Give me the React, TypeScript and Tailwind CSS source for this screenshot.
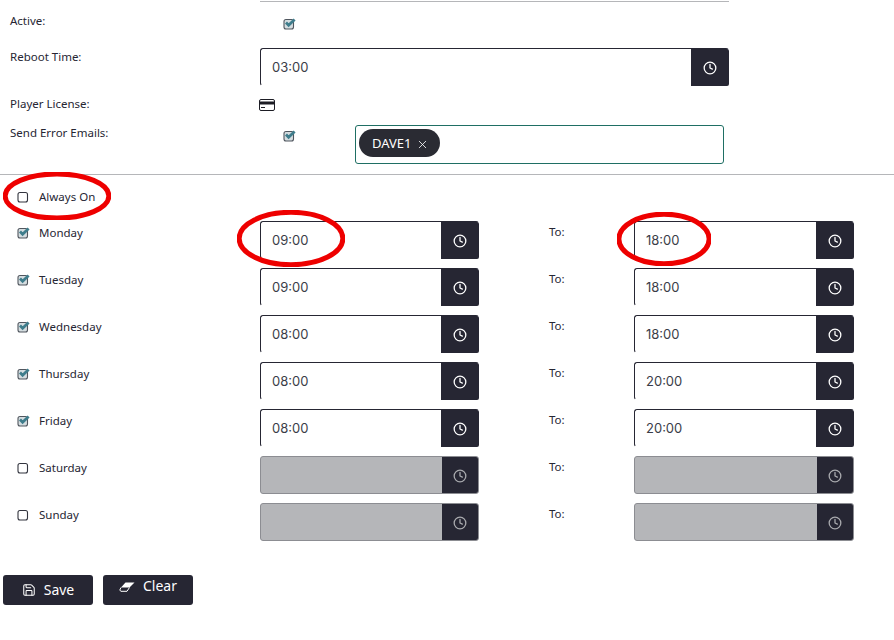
import { Clock, Save, X } from "lucide-react";

const LABEL_FONT = "font-['Noto_Sans',sans-serif]";

const days = [
  { name: "Monday", on: true, from: "09:00", to: "18:00" },
  { name: "Tuesday", on: true, from: "09:00", to: "18:00" },
  { name: "Wednesday", on: true, from: "08:00", to: "18:00" },
  { name: "Thursday", on: true, from: "08:00", to: "20:00" },
  { name: "Friday", on: true, from: "08:00", to: "20:00" },
  { name: "Saturday", on: false, from: "", to: "" },
  { name: "Sunday", on: false, from: "", to: "" },
];

function Check({ on }: { on: boolean }) {
  return (
    <svg width="13" height="12" viewBox="0 0 13 12" className="shrink-0">
      <rect x="1" y="1.5" width="9.5" height="9.5" rx="2" fill={on ? "#d5dde0" : "#fff"} stroke={on ? "#50565e" : "#33353f"} strokeWidth="1.1" />
      {on && <path d="M3 4.6 L5.6 7.2 L11.6 1.4" fill="none" stroke="#3f7d8c" strokeWidth="2.8" />}
    </svg>
  );
}

function TimeInput({ value, disabled, width }: { value: string; disabled: boolean; width: string }) {
  return (
    <div className={`flex h-[38px] ${width} rounded-[3px] border ${disabled ? "border-[#8c8d92] bg-[#b5b6b9]" : "border-[#262633] border-r-transparent border-b-transparent bg-white"}`}>
      <div className="flex-1 pl-[11px] font-['Inter',sans-serif] text-[13px] leading-[37px] text-[#3a3d48]">{value}</div>
      <div className={`flex items-center justify-center rounded-r-[2px] bg-[#262633] ${disabled ? "w-[36px]" : "-mr-[1px] -mb-[1px] w-[38px]"}`}>
        <Clock size={14} strokeWidth={2.2} className={`mt-[1px] ${disabled ? "text-[#a9aaae]" : "text-white"}`} />
      </div>
    </div>
  );
}

function Ring({ className }: { className: string }) {
  return (
    <svg className={`pointer-events-none absolute ${className}`} viewBox="0 0 100 100" preserveAspectRatio="none">
      <ellipse cx="50" cy="50" rx="48" ry="46" fill="none" stroke="#ee0000" strokeWidth="5" vectorEffect="non-scaling-stroke" />
    </svg>
  );
}

export default function App() {
  return (
    <main className={`relative h-[640px] w-[894px] overflow-hidden bg-white text-[11.5px] leading-4 text-[#262633] ${LABEL_FONT}`}>
      <div className="ml-[260px] h-[2px] w-[469px] border-b border-[#b5b6b9]" />

      {/* Device settings */}
      <div className="flex h-[46px] pl-[10px] pt-[11px]">
        <span className="w-[250px]">Active:</span>
        <span className="ml-[23px] mt-[5px]"><Check on /></span>
      </div>
      <div className="flex h-[48px] pl-[10px]">
        <span className="mt-[1px] w-[250px]">Reboot Time:</span>
        <TimeInput value="03:00" disabled={false} width="w-[469px]" />
      </div>
      <div className="flex h-[29px] pl-[10px]">
        <span className="w-[249px]">Player License:</span>
        <svg width="16" height="12" viewBox="0 0 16 12" className="mt-[3px]">
          <rect x="0.5" y="0.5" width="15" height="11" rx="1.5" fill="#fff" stroke="#1c1c24" />
          <rect x="0.5" y="2.5" width="15" height="3" fill="#1c1c24" />
          <rect x="2" y="8" width="4" height="1" fill="#1c1c24" />
        </svg>
      </div>
      <div className="flex h-[49px] pl-[10px]">
        <span className="w-[273px]">Send Error Emails:</span>
        <span className="mt-[5px]"><Check on /></span>
        <div className="ml-[59px] h-[39px] w-[369px] rounded-[3px] border border-[#1f6f64] bg-white p-[3px]">
          <span className="inline-flex h-[28px] items-center gap-[5px] rounded-full bg-[#2a2b33] pl-[13px] pr-[11px] text-[13px] text-white">
            DAVE1
            <X size={13} strokeWidth={1.5} className="mt-[2px]" />
          </span>
        </div>
      </div>

      <hr className="border-[#b5b6b9]" />

      <div className="flex h-[46px] items-center gap-[9px] pb-[2px] pl-[17px]">
        <Check on={false} />
        <span>Always On</span>
      </div>

      {/* Opening hours */}
      <div className="flex flex-col gap-[9px]">
        {days.map((day) => (
          <div key={day.name} className="flex">
            <div className="flex w-[260px] items-start gap-[9px] pl-[17px] pt-[4px]">
              <span className="mt-[2px]"><Check on={day.on} /></span>
              <span>{day.name}</span>
            </div>
            <TimeInput value={day.from} disabled={!day.on} width="w-[219px]" />
            <span className="ml-[70px] w-[85px] pt-[3px]">To:</span>
            <TimeInput value={day.to} disabled={!day.on} width="w-[220px]" />
          </div>
        ))}
      </div>

      <div className="mt-[34px] flex gap-[10px] pl-[3px]">
        <button className="flex h-[30px] w-[90px] items-center justify-center gap-[8px] rounded-[3px] bg-[#262633] text-sm text-white">
          <Save size={14} strokeWidth={1.75} />
          Save
        </button>
        <button className="flex h-[30px] w-[90px] items-start justify-center gap-[8px] rounded-[3px] bg-[#262633] pt-[1px] text-sm text-white">
          <svg width="16" height="10" viewBox="0 0 16 10" className="mt-[6px]">
            <path d="M6.5 0.5 H15.5 L10.5 5.5 H2 Z" fill="#fff" />
            <path d="M2 5.5 L0.8 8 L1.8 9.3 H8 L10.5 5.5" fill="none" stroke="#fff" strokeWidth="1" />
          </svg>
          Clear
        </button>
      </div>

      {/* Hand-drawn annotations */}
      <Ring className="left-[3px] top-[172px] h-[48px] w-[108px]" />
      <Ring className="left-[237px] top-[210px] h-[57px] w-[108px]" />
      <Ring className="left-[617px] top-[212px] h-[54px] w-[94px]" />
    </main>
  );
}
